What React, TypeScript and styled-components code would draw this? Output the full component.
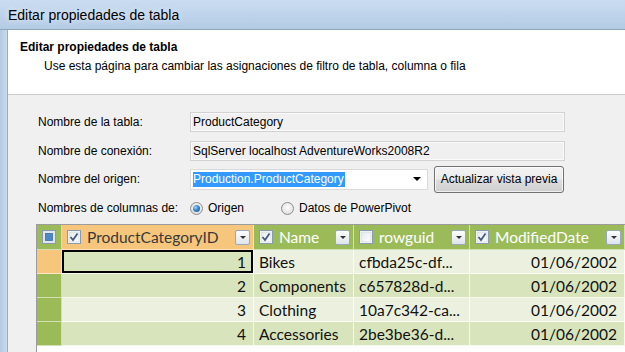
import React from 'react'
import styled, { createGlobalStyle } from 'styled-components'

const GlobalStyle = createGlobalStyle`
  html, body {
    margin: 0;
    padding: 0;
  }

  body {
    width: 625px;
    height: 352px;
    overflow: hidden;
    font-family: "Liberation Sans", Arial, sans-serif;
    font-size: 12px;
    color: #000;
  }
`

const colors = {
  green: '#9bbb59',
  orange: '#f6c67c',
  rowLight: '#ebf1de',
  rowDark: '#d8e4bc',
  body: '#f0f0f0',
}

const Window = styled.div`
  width: 625px;
  height: 352px;
  display: flex;
  flex-direction: column;
  overflow: hidden;
`

const TitleBar = styled.div`
  height: 29px;
  flex: none;
  display: flex;
  align-items: center;
  padding-left: 8px;
  font-size: 14px;
  background: linear-gradient(to bottom, #cbdcf0 0%, #bcd2ea 60%, #b4cbe4 100%);
  border-bottom: 1px solid #8fa5bd;
  text-shadow: 0 0 6px rgba(255, 255, 255, 0.9);
`

const Frame = styled.div`
  flex: 1;
  display: flex;
  min-height: 0;
`

const FrameEdge = styled.div`
  width: 7px;
  flex: none;
  background: linear-gradient(to right, #b4cae3, #c8daee);
  border-right: 1px solid #9badc2;
`

const Content = styled.div`
  flex: 1;
  display: flex;
  flex-direction: column;
  min-width: 0;
`

const Header = styled.div`
  height: 65px;
  flex: none;
  box-sizing: border-box;
  background: #fff;
  border-bottom: 1px solid #cdcdcd;
  box-shadow: 0 1px 0 #e2e2e2;
  padding: 10px 0 0 12px;
`

const HeaderTitle = styled.div`
  font-weight: bold;
  line-height: 14px;
`

const HeaderSubtitle = styled.div`
  line-height: 14px;
  margin: 5px 0 0 24px;
`

const Body = styled.div`
  flex: 1;
  min-height: 0;
  overflow: hidden;
  background: ${colors.body};
  padding: 17px 0 0 28px;
  display: flex;
  flex-direction: column;
`

const FormRow = styled.div<{ $h: number; $mb: number }>`
  display: grid;
  grid-template-columns: 152px 375px;
  align-items: center;
  height: ${p => p.$h}px;
  margin-bottom: ${p => p.$mb}px;
  padding-left: 2px;
`

const Label = styled.div`
  white-space: nowrap;
`

const TextBox = styled.div`
  height: 20px;
  box-sizing: border-box;
  border: 1px solid #d2d2d2;
  box-shadow: inset 0 0 0 1px #fafafa;
  background: ${colors.body};
  padding-left: 2px;
  display: flex;
  align-items: center;
  white-space: nowrap;
`

const FieldLine = styled.div`
  display: flex;
  align-items: center;
  gap: 6px;
`

const Combo = styled.div`
  width: 238px;
  height: 21px;
  box-sizing: border-box;
  border: 1px solid #dadada;
  background: #fff;
  display: flex;
  align-items: center;
  padding: 0 6px 0 2px;
`

const Selected = styled.span`
  background: #3399ff;
  color: #fff;
  line-height: 15px;
  padding-right: 1px;
`

const ComboArrow = styled.span`
  margin-left: auto;
  width: 0;
  height: 0;
  border-left: 4px solid transparent;
  border-right: 4px solid transparent;
  border-top: 4px solid #000;
`

const Button = styled.div`
  width: 130px;
  height: 27px;
  box-sizing: border-box;
  border: 1px solid #707070;
  border-radius: 3px;
  background: linear-gradient(to bottom, #f3f3f3 0%, #ebebeb 48%, #dddddd 52%, #cfcfcf 100%);
  box-shadow: inset 0 0 0 1px rgba(255, 255, 255, 0.7);
  display: flex;
  align-items: center;
  justify-content: center;
  white-space: nowrap;
`

const RadioGroup = styled.div`
  display: flex;
  align-items: center;
`

const RadioOption = styled.label`
  display: flex;
  align-items: center;
  gap: 5px;
  width: 91px;
  flex: none;
  white-space: nowrap;
`

const RadioCircle = styled.span<{ $checked?: boolean }>`
  width: 13px;
  height: 13px;
  flex: none;
  box-sizing: border-box;
  border-radius: 50%;
  border: 1px solid #8d8d8d;
  background: radial-gradient(circle at 50% 40%, #ffffff 0%, #e6e6e6 60%, #cfcfcf 100%);
  display: flex;
  align-items: center;
  justify-content: center;

  &::after {
    content: '';
    display: ${p => (p.$checked ? 'block' : 'none')};
    width: 7px;
    height: 7px;
    border-radius: 50%;
    background: radial-gradient(circle at 35% 35%, #9fd3ff 0%, #3a86cf 45%, #174f8f 100%);
  }
`

/* grid */

const Grid = styled.div`
  flex: 1;
  margin-top: 7px;
  background: #fff;
  border-top: 1px solid #9c9c9c;
  border-left: 1px solid #9c9c9c;
  display: grid;
  grid-template-columns: 25px 192px 100px 116px 155px;
  grid-template-rows: 25px;
  grid-auto-rows: 24px;
  align-content: start;
  font-family: Lato, "Open Sans", sans-serif;
  font-size: 15.5px;
`

const HeadCell = styled.div<{ $active?: boolean }>`
  box-sizing: border-box;
  background: ${p => (p.$active ? colors.orange : colors.green)};
  color: ${p => (p.$active ? '#3a3a3a' : '#fff')};
  border-right: 1px solid rgba(255, 255, 255, 0.55);
  border-bottom: 1px solid rgba(255, 255, 255, 0.55);
  display: flex;
  align-items: center;
  padding: 0 3px 0 5px;
  white-space: nowrap;
  overflow: hidden;
`

const HeadName = styled.span`
  margin-left: 6px;
`

const RowHead = styled.div<{ $active?: boolean }>`
  box-sizing: border-box;
  background: ${p => (p.$active ? colors.orange : colors.green)};
  border-right: 1px solid rgba(255, 255, 255, 0.55);
  border-bottom: 1px solid rgba(255, 255, 255, 0.55);
  display: flex;
  align-items: center;
  justify-content: center;
`

const Cell = styled.div<{ $dark?: boolean; $right?: boolean; $focus?: boolean }>`
  box-sizing: border-box;
  background: ${p => (p.$dark ? colors.rowDark : colors.rowLight)};
  border-right: 1px solid rgba(255, 255, 255, 0.75);
  border-bottom: 1px solid rgba(255, 255, 255, 0.75);
  box-shadow: ${p => (p.$focus ? 'inset 0 0 0 2px #000' : 'none')};
  display: flex;
  align-items: center;
  justify-content: ${p => (p.$right ? 'flex-end' : 'flex-start')};
  padding: 0 7px 0 5px;
  color: #111;
  white-space: nowrap;
  overflow: hidden;
`

const DropButton = styled.span`
  margin-left: auto;
  width: 15px;
  height: 15px;
  flex: none;
  box-sizing: border-box;
  border: 1px solid #9ba8b8;
  border-radius: 2px;
  background: linear-gradient(to bottom, #fbfcfd, #dfe5ec);
  display: flex;
  align-items: center;
  justify-content: center;

  &::after {
    content: '';
    border-left: 3px solid transparent;
    border-right: 3px solid transparent;
    border-top: 3px solid #333;
  }
`

function CheckBox({ checked }: { checked: boolean }) {
  return (
    <svg width="14" height="14" viewBox="0 0 14 14" style={{ flex: 'none' }}>
      <defs>
        <linearGradient id="cbbg" x1="0" y1="0" x2="1" y2="1">
          <stop offset="0" stopColor="#e4e9ef" />
          <stop offset="1" stopColor="#ffffff" />
        </linearGradient>
      </defs>
      <rect x="0.5" y="0.5" width="13" height="13" fill="#fff" stroke="#8a9bb0" />
      <rect x="2" y="2" width="10" height="10" fill="url(#cbbg)" stroke="#c3ccd6" strokeWidth="0.6" />
      {checked && (
        <path d="M3.5 7 L6 10 L10.5 3.5" fill="none" stroke="#3c5780" strokeWidth="1.7" />
      )}
    </svg>
  )
}

function SelectAllIcon() {
  return (
    <svg width="14" height="14" viewBox="0 0 14 14">
      <rect x="0.5" y="0.5" width="13" height="13" fill="#dfe6ee" stroke="#8c9aab" />
      <rect x="3.5" y="3.5" width="7" height="7" fill="#4f86c6" stroke="#3d6fa8" strokeWidth="0.8" />
    </svg>
  )
}

type Row = { id: number; name: string; guid: string; date: string }

const rows: Array<Row> = [
  { id: 1, name: 'Bikes', guid: 'cfbda25c-df...', date: '01/06/2002' },
  { id: 2, name: 'Components', guid: 'c657828d-d...', date: '01/06/2002' },
  { id: 3, name: 'Clothing', guid: '10a7c342-ca...', date: '01/06/2002' },
  { id: 4, name: 'Accessories', guid: '2be3be36-d...', date: '01/06/2002' },
]

const columns = [
  { name: 'ProductCategoryID', checked: true, active: true },
  { name: 'Name', checked: true, active: false },
  { name: 'rowguid', checked: false, active: false },
  { name: 'ModifiedDate', checked: true, active: false },
]

export default function App() {
  return (
    <>
      <GlobalStyle />
      <Window>
        <TitleBar>Editar propiedades de tabla</TitleBar>
        <Frame>
          <FrameEdge />
          <Content>
            <Header>
              <HeaderTitle>Editar propiedades de tabla</HeaderTitle>
              <HeaderSubtitle>
                Use esta página para cambiar las asignaciones de filtro de tabla, columna o fila
              </HeaderSubtitle>
            </Header>
            <Body>
              <FormRow $h={20} $mb={9}>
                <Label>Nombre de la tabla:</Label>
                <TextBox>ProductCategory</TextBox>
              </FormRow>
              <FormRow $h={20} $mb={4}>
                <Label>Nombre de conexión:</Label>
                <TextBox>SqlServer localhost AdventureWorks2008R2</TextBox>
              </FormRow>
              <FormRow $h={28} $mb={6}>
                <Label>Nombre del origen:</Label>
                <FieldLine>
                  <Combo>
                    <Selected>Production.ProductCategory</Selected>
                    <ComboArrow />
                  </Combo>
                  <Button>Actualizar vista previa</Button>
                </FieldLine>
              </FormRow>
              <FormRow $h={18} $mb={0}>
                <Label>Nombres de columnas de:</Label>
                <RadioGroup>
                  <RadioOption>
                    <RadioCircle $checked />
                    Origen
                  </RadioOption>
                  <RadioOption>
                    <RadioCircle />
                    Datos de PowerPivot
                  </RadioOption>
                </RadioGroup>
              </FormRow>

              <Grid>
                <RowHead>
                  <SelectAllIcon />
                </RowHead>
                {columns.map(c => (
                  <HeadCell key={c.name} $active={c.active}>
                    <CheckBox checked={c.checked} />
                    <HeadName>{c.name}</HeadName>
                    <DropButton />
                  </HeadCell>
                ))}
                {rows.map((r, idx) => {
                  const dark = idx % 2 === 1
                  return (
                    <React.Fragment key={r.id}>
                      <RowHead $active={idx === 0} />
                      <Cell $dark={dark || idx === 0} $right $focus={idx === 0}>{r.id}</Cell>
                      <Cell $dark={dark}>{r.name}</Cell>
                      <Cell $dark={dark}>{r.guid}</Cell>
                      <Cell $dark={dark} $right>{r.date}</Cell>
                    </React.Fragment>
                  )
                })}
              </Grid>
            </Body>
          </Content>
        </Frame>
      </Window>
    </>
  )
}
